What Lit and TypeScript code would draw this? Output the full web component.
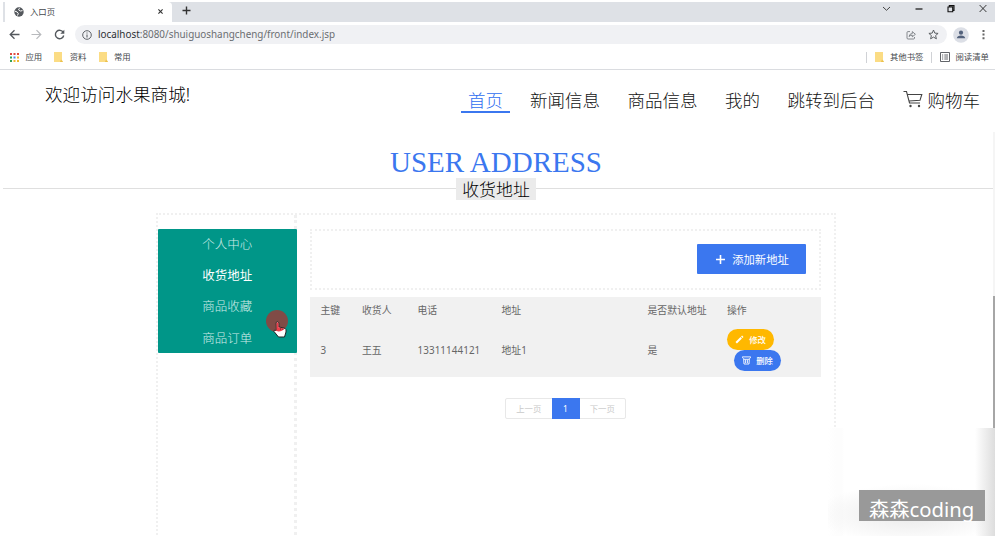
import { LitElement, html, css, svg } from "lit";
import { customElement } from "lit/decorators.js";
import { classMap } from "lit/directives/class-map.js";

const icon = (name: string, w: number, h: number, body: unknown, box = `0 0 ${w} ${h}`) =>
  html`<svg class=${name} width=${w} height=${h} viewBox=${box} fill="none">${body}</svg>`;

@customElement("browser-chrome")
class BrowserChrome extends LitElement {
  static styles = css`
    :host { display: block; height: 70px; box-sizing: border-box; padding-top: 2px; border-bottom: 1px solid #dadce0; color: #45484c;
      font: 8.4px/20px "Noto Sans", "Noto Sans CJK SC", sans-serif; }
    svg { display: block; flex: none; }
    .tabs { display: flex; height: 20px; margin-left: 3px; background: #dee1e6; }
    .tab { display: flex; align-items: center; margin-left: 2px; padding: 0 7px 1px 9px; background: #fff; border-radius: 0 4px 0 0; height: 20px; box-sizing: border-box; width: 167px; line-height: 18px; }
    .tab span { margin-left: 6px; flex: 1; }
    .tab .close { margin-right: 2px; }
    .plus { margin: 4px 0 0 10px; }
    .win { display: flex; margin-left: auto; padding: 2px 8px 0 0; gap: 24px; }
    .bar { display: flex; align-items: center; height: 25px; padding-left: 9px; }
    .fwd { margin-left: 11px; }
    .reload { margin-left: 12px; }
    .omni { display: flex; align-items: center; height: 19px; width: 872px; box-sizing: border-box; margin-left: 10px; border-radius: 10px; background: #f0f1f4; padding: 0 8px 0 7px; }
    .url { flex: 1; margin-left: 6px; font-size: 9.9px; color: #6a6d71; line-height: 19px; white-space: nowrap; }
    .host { color: #2c2f33; }
    .star { margin-left: 12px; }
    .avatar { margin-left: 6px; }
    .dots { margin-left: 13px; }
    .marks { display: flex; align-items: center; height: 20px; padding: 0 6px 0 10px; line-height: 20px; }
    .marks span { margin-left: 6.5px; white-space: nowrap; }
    .folder { margin-left: 12px; }
    .right { display: flex; align-items: center; margin-left: auto; }
    .sep { width: 1px; height: 11px; background: #d0d2d6; }
    .right .folder { margin-left: 8px; }
    .right .sep + .list { margin-left: 8px; }
    .right span + .sep { margin-left: 7px; }
    .right .list + span { margin-left: 6px; }
  `;
  folder() {
    return icon("folder", 9, 10, svg`<path d="M.5 0H8V8L9 10H0V0Z" fill="#fbdc84"/><path d="M7 7.5L9 10H6Z" fill="#eac04c"/>`);
  }
  render() {
    const cols = ["#df4b40", "#df4b40", "#df4b40", "#33a457", "#4385ee", "#efb92f", "#33a457", "#efb92f", "#efb92f"];
    return html`
      <div class="tabs">
        <div class="tab">
          ${icon("globe", 10, 10, svg`<circle cx="5" cy="5" r="4.7" fill="#54585d"/><path d="M1 4.2L3.2 5L4.3 6.5L3.5 8.5M5.5 1.2L4.5 2.7L6.5 4L8.5 3.6" stroke="#fff" stroke-width="1"/>`)}
          <span>入口页</span>
          ${icon("close", 5, 5, svg`<path d="M.4.4L4.6 4.6M4.6.4L.4 4.6" stroke="#333" stroke-width="1.1"/>`)}
        </div>
        ${icon("plus", 9, 9, svg`<path d="M4.5.5V8.5M.5 4.5H8.5" stroke="#333" stroke-width="1.4"/>`)}
        <div class="win">
          ${icon("v", 9, 9, svg`<path d="M1 3L4.5 6.3L8 3" stroke="#444"/>`)}
          ${icon("min", 8, 9, svg`<path d="M.5 5H7.5" stroke="#111" stroke-width="1.2"/>`)}
          ${icon("max", 8, 9, svg`<path d="M1 3H5.7V7.7H1ZM2.3 3V1.6H7V6.4H5.7" stroke="#111" stroke-width="1.1"/>`)}
          ${icon("x", 8, 9, svg`<path d="M.6 1L7.4 8M7.4 1L.6 8" stroke="#222" stroke-width=".9"/>`)}
        </div>
      </div>
      <div class="bar">
        ${icon("back", 11, 11, svg`<path d="M10.5 5.5H1.3M5.5 1.2L1.2 5.5L5.5 9.8" stroke="#54585d" stroke-width="1.3"/>`)}
        ${icon("fwd", 11, 11, svg`<path d="M.5 5.5H9.7M5.5 1.2L9.8 5.5L5.5 9.8" stroke="#b8babd" stroke-width="1.2"/>`)}
        ${icon("reload", 11, 11, svg`<path d="M9.3 3.5A4.2 4.2 0 1 0 9.7 6.5" stroke="#54585d" stroke-width="1.4"/><path d="M10.3 .8V4.8H6.3Z" fill="#54585d"/>`)}
        <div class="omni">
          ${icon("info", 10, 10, svg`<circle cx="5" cy="5" r="4.3" stroke="#5f6368"/><path d="M5 4.5V7.5M5 2.5V3.6" stroke="#5f6368" stroke-width="1.1"/>`)}
          <div class="url"><span class="host">localhost</span>:8080/shuiguoshangcheng/front/index.jsp</div>
          ${icon("share", 10, 10, svg`<path d="M4 1.6H2Q1 1.6 1 2.6V8Q1 9 2 9H7.5Q8.5 9 8.5 8V7M3 6.5Q3.5 3.6 6.3 3.5V1.6L9.4 4.3L6.3 6.8V5.2Q4.3 5.2 3 6.5Z" stroke="#6a6e73" stroke-width=".8"/>`)}
          ${icon("star", 11, 11, svg`<path d="M5.5 1L6.8 4.1L10.1 4.4L7.6 6.6L8.4 9.8L5.5 8.1L2.6 9.8L3.4 6.6L.9 4.4L4.2 4.1Z" stroke="#54585d" stroke-width=".95"/>`)}
        </div>
        ${icon("avatar", 16, 16, svg`<circle cx="8" cy="8" r="7.8" fill="#dcdfe6"/><circle cx="8" cy="5.7" r="2.1" fill="#53627c"/><path d="M3.8 11.3Q4.3 8.6 8 8.6Q11.7 8.6 12.2 11.3Z" fill="#53627c"/>`)}
        ${icon("dots", 3, 11, svg`<path d="M.5 1H2.5V3H.5ZM.5 4.6H2.5V6.6H.5ZM.5 8.2H2.5V10.2H.5Z" fill="#666"/>`)}
      </div>
      <div class="marks">
        ${icon("apps", 9, 9, cols.map((c, i) => svg`<rect x=${(i % 3) * 3.5} y=${Math.floor(i / 3) * 3.5} width="2" height="2" fill=${c}/>`))}
        <span>应用</span>${this.folder()}<span>资料</span>${this.folder()}<span>常用</span>
        <div class="right">
          <div class="sep"></div>${this.folder()}<span>其他书签</span><div class="sep"></div>
          ${icon("list", 10, 10, svg`<path d="M.5.5H9.5V9.5H.5ZM2 3H3.2M4.3 3H8M2 5H3.2M4.3 5H8M2 7H3.2M4.3 7H8" stroke="#505459" stroke-width=".9"/>`)}
          <span>阅读清单</span>
        </div>
      </div>`;
  }
}

@customElement("address-panel")
class AddressPanel extends LitElement {
  static styles = css`
    :host { display: block; width: 511px; color: #666; font: 9.85px/20px "Noto Sans", "Noto Sans CJK SC", sans-serif; }
    svg { display: block; flex: none; }
    .top { display: flex; justify-content: flex-end; height: 61px; box-sizing: border-box; padding: 13px 13px 0 0; border: 2px dotted #f0f0f0; }
    .add { display: flex; align-items: center; justify-content: center; gap: 7px; width: 109px; height: 30px; border-radius: 1px; background: #3b77ef; color: #fff; font-size: 11.3px; line-height: 22px; }
    .add svg { margin-left: 2px; }
    .add span { padding-top: 1px; }
    .table { margin-top: 7px; height: 80px; background: #f1f1f1; box-sizing: border-box; padding: 3px 0 0 10.5px; }
    .row { display: grid; grid-template-columns: 41.5px 55.5px 84px 146px 79.5px 1fr; height: 20px; white-space: nowrap; }
    .row + .row { margin-top: 9px; height: 42px; line-height: 42px; }
    .ops { display: flex; flex-direction: column; }
    .op { display: flex; align-items: center; justify-content: center; gap: 5px; width: 47px; height: 21px; border-radius: 11px; background: #3b77ef; color: #fff; font-size: 8.4px; line-height: 21px; font-weight: 500; }
    .op.edit { background: #ffb800; }
    .op.del { margin-left: 7px; }
    .tel { letter-spacing: .08px; }
    .pages { display: flex; width: 121px; height: 21px; margin: 21px auto 0 195px; box-sizing: border-box; line-height: 19px; border: 1px solid #e8e8e8; border-radius: 2px; font-size: 8.4px; text-align: center; color: #c9c9c9; }
    .pages span { flex: 1; }
    .pages .cur { flex: none; width: 28px; margin: -1px 0; line-height: 21px; background: #3b77ef; color: #fff; }
  `;
  render() {
    return html`
      <div class="top"><div class="add">
        ${icon("p", 9, 9, svg`<path d="M4.5 0V9M0 4.5H9" stroke="#fff" stroke-width="1.6"/>`)}<span>添加新地址</span></div></div>
      <div class="table">
        <div class="row">${["主键", "收货人", "电话", "地址", "是否默认地址", "操作"].map((t) => html`<div>${t}</div>`)}</div>
        <div class="row">
          ${["3", "王五", "13311144121", "地址1", "是"].map((t, i) => html`<div class=${classMap({ tel: i === 2 })}>${t}</div>`)}
          <div class="ops">
            <div class="op edit">${icon("pen", 9, 9, svg`<path d="M1.2 7.8L6.2 2.8" stroke="#fff" stroke-width="2"/><path d="M6.8 2.2L7.8 1.2" stroke="#fff" stroke-width="2"/>`)}<span>修改</span></div>
            <div class="op del">${icon("bin", 9, 9, svg`<path d="M.3 2.2V.9H8.7V2.2M1.6 2.2L2 8H7L7.4 2.2M2 3.3H7M3.6 3.7V7M5.4 3.7V7" stroke="#fff" stroke-width=".9"/>`)}<span>删除</span></div>
          </div>
        </div>
      </div>
      <div class="pages"><span>上一页</span><span class="cur">1</span><span>下一页</span></div>`;
  }
}

@customElement("app-root")
class AppRoot extends LitElement {
  static styles = css`
    :host { display: block; position: relative; width: 995px; height: 536px; overflow: hidden; background: #fff; font-family: "Noto Sans", "Noto Sans CJK SC", sans-serif; }
    svg { display: block; }
    .header { display: flex; justify-content: space-between; height: 60px; padding: 0 15px 0 45px; font-size: 17.5px; font-weight: 300; white-space: nowrap; }
    .welcome { line-height: 48px; color: #000; font-size: 17.6px; }
    .nav { display: flex; color: #111; line-height: 60px; height: 43px; }
    .item { margin-right: 27.5px; }
    .item.on { color: #2f6ef0; padding: 0 7px; margin-right: 20px; border-bottom: 2px solid #3b77ef; height: 41px; }
    .cart { display: flex; gap: 5px; }
    .cart svg { margin-top: 20px; }
    .head { display: flex; flex-direction: column; align-items: center; height: 83px; }
    .title { font: 29px/34px "Liberation Serif", serif; color: #3b77ef; margin: 15px 3px 0 0; }
    .rule { display: flex; align-items: center; align-self: flex-start; width: 990px; margin: -2px 0 0 3px; height: 22px; }
    .rule::before, .rule::after { content: ""; flex: 0 0 453px; height: 1px; background: #dfdfdf; }
    .rule::after { flex: 1; }
    .rule span { position: relative; top: 1px; width: 80px; text-align: center; background: #ebebeb; color: #000; font-size: 16.9px; font-weight: 300; line-height: 24px; height: 22px; }
    .content { display: flex; width: 680px; height: 330px; box-sizing: border-box; margin-left: 156px; border: 2px dotted #f0f0f0; border-bottom: 0; }
    .left { width: 136px; border-right: 3px dotted #f0f0f0; padding-top: 14px; height: 330px; }
    .menu { position: relative; width: 138.5px; height: 124px; background: #009688; border-radius: 1px; display: flex; flex-direction: column; color: #d0ece9; font-size: 12.5px; font-weight: 300; line-height: 31px; text-align: center; }
    .menu div { flex: none; height: 31.2px; }
    .menu .on { color: #fff; font-weight: 400; }
    address-panel { margin: 14px 0 0 13px; }
    .pointer { position: absolute; left: 266px; top: 310px; }
    .track { position: absolute; left: 993px; top: 132px; width: 2px; height: 164px; background: #f5f5f5; }
    .thumb { position: absolute; left: 993px; top: 296px; width: 2px; height: 132px; background: #a6a6a6; }
    .veil { position: absolute; left: 828px; top: 428px; width: 167px; height: 108px; background: linear-gradient(90deg, #fff0 147px, #ddd 167px), radial-gradient(ellipse 95px 30px at 82px 86px, #eee 20%, #fff0), linear-gradient(90deg, #fff, #fdfdfd 8px, #fdfdfd 14px, #fff 16px); }
    .mark { position: absolute; left: 859px; top: 490px; width: 126px; height: 31px; box-sizing: border-box; background: #999; color: #fff; padding-left: 10px; font-size: 20.3px; line-height: 39px; white-space: nowrap; }
  `;
  render() {
    const side = ["个人中心", "收货地址", "商品收藏", "商品订单"];
    return html`
      <browser-chrome></browser-chrome>
      <div class="header">
        <div class="welcome">欢迎访问水果商城!</div>
        <div class="nav">
          ${["首页", "新闻信息", "商品信息", "我的", "跳转到后台"].map((t, i) => html`<div class=${classMap({ item: true, on: i === 0 })}>${t}</div>`)}
          <div class="cart">${icon("c", 20, 19, svg`<path d="M.5 1.5H3.5L6.5 13H17M4.3 4.5H18.8L17 10.3L6 11" stroke="#444" stroke-width="1.1"/><circle cx="7.5" cy="16" r="1.2" fill="#444"/><circle cx="16" cy="16" r="1.2" fill="#444"/>`)}<span>购物车</span></div>
        </div>
      </div>
      <div class="head"><div class="title">USER ADDRESS</div><div class="rule"><span>收货地址</span></div></div>
      <div class="content">
        <div class="left"><div class="menu">${side.map((t, i) => html`<div class=${classMap({ on: i === 1 })}>${t}</div>`)}</div></div>
        <address-panel></address-panel>
      </div>
      <div class="pointer">${icon("hand", 24, 29, svg`<circle cx="11" cy="11" r="11" fill="#804b46"/><path d="M10.2 12.5Q11.8 10.8 12.8 12.8V17L19 18.4Q20.5 19 20 22L18.5 27H12.5L8 21.5Q7.5 19.5 10.4 20.5Z" fill="#fff" stroke="#222" stroke-width="1"/><path d="M10.5 13Q11.7 11.5 12.5 13V17.2L18.5 18.7Q17 21 12.4 21.5L9 20.5L10.5 20Z" fill="#ee3f4b"/><path d="M14.5 17.8V20M16.7 18.3V20" stroke="#8d2730" stroke-width=".7"/>`)}</div>
      <div class="track"></div><div class="thumb"></div>
      <div class="veil"></div><div class="mark">森森coding</div>`;
  }
}
